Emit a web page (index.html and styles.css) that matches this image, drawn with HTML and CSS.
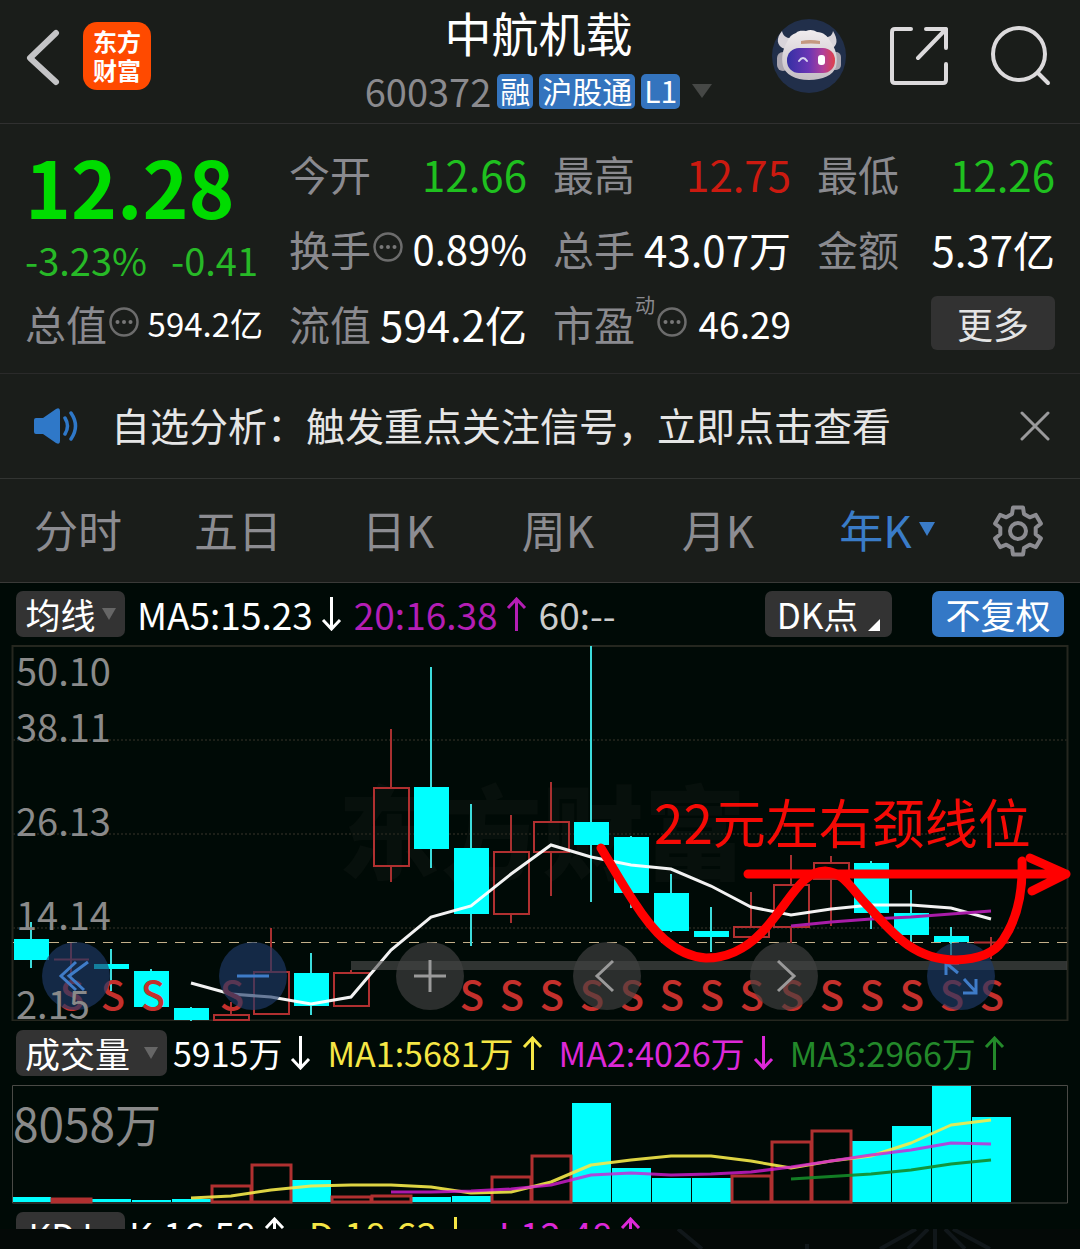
FILE: index.html
```html
<!DOCTYPE html>
<html lang="zh-CN">
<head>
<meta charset="utf-8">
<meta name="viewport" content="width=device-width, initial-scale=1">
<title>中航机载 600372</title>
<link rel="stylesheet" href="styles.css">
</head>
<body>
<header class="topbar">
  <div class="topbar-left">
    <button class="icon-btn" aria-label="返回"><svg width="34" height="60" viewBox="0 0 34 60"><path d="M30 7 4 32l26 24" fill="none" stroke="#c4c4c6" stroke-width="6" stroke-linecap="round" stroke-linejoin="round"/></svg></button>
    <a class="logo" href="#"><span>东方</span><span>财富</span></a>
  </div>
  <div class="stock">
    <h1 class="stock-name">中航机载</h1>
    <div class="stock-sub">
      <span class="stock-code">600372</span>
      <span class="badge">融</span><span class="badge">沪股通</span><span class="badge">L1</span>
      <svg class="caret" width="20" height="14" viewBox="0 0 20 14"><path d="M0 0h20L10 14z" fill="#464846"/></svg>
    </div>
  </div>
  <div class="topbar-right">
    <button class="icon-btn" aria-label="智能助手">
      <svg width="76" height="76" viewBox="0 0 76 76">
        <defs>
          <linearGradient id="visor" x1="0" x2="1"><stop offset="0" stop-color="#3430a4"/><stop offset=".45" stop-color="#6a35b4"/><stop offset=".75" stop-color="#b0409a"/><stop offset="1" stop-color="#e0404a"/></linearGradient>
          <linearGradient id="shell" x1="0" y1="0" x2="0" y2="1"><stop offset="0" stop-color="#f0ecee"/><stop offset="1" stop-color="#c4bec4"/></linearGradient>
        </defs>
        <circle cx="38" cy="38" r="37" fill="#212f4a"/>
        <path d="M11 13c-6 7-6 15 3 18l8-11c-6 1-10-2-11-7zM62 13c5 8 5 15-2 18l-8-12c6 1 9-1 10-6z" fill="#d8d4da"/>
        <rect x="6" y="34" width="12" height="19" rx="6" fill="#a9a4ae"/><rect x="59" y="34" width="11" height="18" rx="5" fill="#a9a4ae"/>
        <path d="M16 24c2-5 5-8 9-9 3-3 7-2 10-2 4-2 8-1 11 1 6 0 11 4 13 9 6 8 8 16 6 26-3 8-13 13-27 13S14 56 12 48c-2-9 0-17 4-24z" fill="url(#shell)"/>
        <path d="M30 23q9-2 19 0v3q-9-1-19 0z" fill="#c59a80"/>
        <rect x="16" y="30" width="48" height="25" rx="12" fill="url(#visor)"/>
        <path d="M28 43q4-6 8 0" fill="none" stroke="#d8d4f0" stroke-width="2" stroke-linecap="round"/>
        <rect x="47" y="37" width="7" height="10" rx="3" fill="#fff"/>
      </svg>
    </button>
    <button class="icon-btn" aria-label="分享"><svg width="58" height="58" viewBox="0 0 58 58" fill="none" stroke="#dcdadc" stroke-width="4" stroke-linecap="round" stroke-linejoin="round"><path d="M21 2H5q-3 0-3 3v48q0 3 3 3h48q3 0 3-3V37M36 2h20v19M56 2 28 31"/></svg></button>
    <button class="icon-btn" aria-label="搜索"><svg width="60" height="60" viewBox="0 0 60 60" fill="none" stroke="#dcdadc" stroke-width="4" stroke-linecap="round"><circle cx="28" cy="28" r="26"/><path d="m47 47 10 10"/></svg></button>
  </div>
</header>

<section class="quote">
  <div class="price">
    <div class="price-now">12.28</div>
    <div class="price-change"><span>-3.23%</span><span>-0.41</span></div>
  </div>
  <div class="cell"><span class="label">今开</span><span class="value down">12.66</span></div>
  <div class="cell"><span class="label">最高</span><span class="value up">12.75</span></div>
  <div class="cell"><span class="label">最低</span><span class="value down">12.26</span></div>
  <div class="cell"><span class="label">换手<svg class="info" viewBox="0 0 30 30"><use href="#i-dots"/></svg></span><span class="value value-md">0.89%</span></div>
  <div class="cell"><span class="label">总手</span><span class="value">43.07万</span></div>
  <div class="cell"><span class="label">金额</span><span class="value">5.37亿</span></div>
  <div class="cell"><span class="label">总值<svg class="info" viewBox="0 0 30 30"><use href="#i-dots"/></svg></span><span class="value value-sm">594.2亿</span></div>
  <div class="cell"><span class="label">流值</span><span class="value">594.2亿</span></div>
  <div class="cell"><span class="label">市盈<sup class="sup">动</sup><svg class="info" viewBox="0 0 30 30"><use href="#i-dots"/></svg></span><span class="value value-pe">46.29</span></div>
  <div class="cell cell-end"><button class="more">更多</button></div>
</section>

<section class="notice">
  <svg width="44" height="36" viewBox="0 0 44 36"><path d="M0 12q0-2 2-2h7L22 1q4-2 4 2v30q0 4-4 2L9 26H2q-2 0-2-2z" fill="#2f78c8"/><path d="M31 10q5 8 0 16M37 5q9 13 0 26" fill="none" stroke="#2f78c8" stroke-width="3.5" stroke-linecap="round"/></svg>
  <a class="notice-text" href="#">自选分析：触发重点关注信号，立即点击查看</a>
  <button class="icon-btn" aria-label="关闭"><svg width="30" height="30" viewBox="0 0 30 30"><path d="m2 2 26 26M28 2 2 28" stroke="#9a9a9c" stroke-width="3" stroke-linecap="round"/></svg></button>
</section>

<nav class="tabs">
  <button class="tab">分时</button>
  <button class="tab">五日</button>
  <button class="tab">日K</button>
  <button class="tab">周K</button>
  <button class="tab">月K</button>
  <button class="tab tab-active">年K<svg width="16" height="14" viewBox="0 0 16 14"><path d="M0 0h16L8 14z" fill="#3a7cc8"/></svg></button>
  <button class="tab tab-gear" aria-label="设置"><svg width="54" height="54" viewBox="-27 -27 54 54" fill="none" stroke="#8c8c91" stroke-width="4" stroke-linejoin="round"><path d="M-6-17-5-23.500H5L6-17 11.700-13.700 17.900-16.100 22.900-7.400 17.700-3.300V3.300L22.900 7.400 17.900 16.100 11.700 13.700 6 17 5 23.500H-5L-6 17-11.700 13.700-17.900 16.100-22.900 7.400-17.700 3.300V-3.300L-22.900-7.400-17.900-16.100-11.700-13.700z"/><circle r="8"/></svg></button>
</nav>

<main class="charts">
  <div class="bar bar-ma">
    <button class="chip">均线<svg width="14" height="12" viewBox="0 0 14 12"><path d="M0 0h14L7 12z" fill="#666"/></svg></button>
    <span class="ind white">MA5:15.23<svg class="arrow" viewBox="0 0 21 34"><use href="#i-down"/></svg></span>
    <span class="ind magenta">20:16.38<svg class="arrow" viewBox="0 0 21 34"><use href="#i-up"/></svg></span>
    <span class="ind grey">60:--</span>
    <button class="chip chip-dk">DK点<svg width="12" height="12" viewBox="0 0 12 12"><path d="M12 0v12H0z" fill="#fff"/></svg></button>
    <button class="chip chip-blue">不复权</button>
  </div>

  <div class="kline">
    <svg class="plot" viewBox="0 645 1080 376">
      <g class="watermark"><text x="338" y="872">东方财富</text></g>
      <path d="M12.500 646H1067.500V1020.500H12.500z" fill="none" stroke="#25271f" stroke-width="2"/>
      <path d="M13 740h1054M13 834h1054M13 928h1054" stroke="#1c1f18" stroke-width="2" stroke-dasharray="2 2"/>
      <path d="M13 942.500h1054" stroke="#c4b08a" stroke-dasharray="10 8"/>
      <g class="wick-down">
        <path d="M31 922v46M111 949v42M151 969v6M191 1007v14M311 953v62M431 667v201M471 804v142M591 646v256M631 836v72M671 874v58M711 907v45M871 861v68M911 890v52M951 927v28"/>
      </g>
      <g class="wick-up">
        <path d="M71 943v44M231 1002v12M271 928v44M351 970v3M391 729v59M391 866v16M511 815v37M511 914v9M551 782v40M551 852v44M751 892v35M791 855v30M791 927v16M831 856v7M831 879v47M991 937v22"/>
      </g>
      <g fill="#00ffff">
        <path d="M14 939h35v21H14zM94 964h35v5H94zM134 971h35v36h-35zM174 1008h35v12h-35zM294 973h35v33h-35zM414 787h35v62h-35zM454 848h35v66h-35zM574 822h35v23h-35zM614 837h35v56h-35zM654 893h35v38h-35zM694 931h35v6h-35zM854 863h35v50h-35zM894 913h35v22h-35zM934 936h35v6h-35z"/>
      </g>
      <path class="body-up" d="M54 959.500h35M214 1015h35v5h-35zM254 972h35v42h-35zM334 973h35v33h-35zM374 788h35v78h-35zM494 852h35v62h-35zM534 822h35v30h-35zM734 927h35v10h-35zM774 885h35v42h-35zM814 863h35v16h-35zM974 942.500h35"/>
      <path d="M191 983 231 994 271 997 311 1004 351 997 391 950 431 917 471 906 511 874 551 845 591 857 631 865 671 869 711 886 751 907 791 915 831 909 871 905 911 905 951 908 991 919" fill="none" stroke="#fff" stroke-width="3" stroke-opacity=".95"/>
      <path d="M791 926 831 922 871 919 911 917 951 914 991 911" fill="none" stroke="#a81ca8" stroke-width="3"/>
      <g class="signals">
        <text x="72" y="1010">S</text><text x="113" y="1010">S</text><text x="153" y="1010">S</text><text x="232" y="1010">S</text><text x="472" y="1010">S</text><text x="512" y="1010">S</text><text x="552" y="1010">S</text><text x="592" y="1010">S</text><text x="632" y="1010">S</text><text x="672" y="1010">S</text><text x="712" y="1010">S</text><text x="752" y="1010">S</text><text x="792" y="1010">S</text><text x="832" y="1010">S</text><text x="872" y="1010">S</text><text x="912" y="1010">S</text><text x="952" y="1010">S</text><text x="992" y="1010">S</text>
      </g>
      <path d="M351 961h716v9H351z" fill="#505050" fill-opacity=".6"/>
    </svg>
    <div class="controls">
      <button class="round round-blue" aria-label="最早"><svg viewBox="0 0 68 68"><path d="M34 20 19 34l15 14M46 20 27 34l15 14"/></svg></button>
      <button class="round round-blue" aria-label="缩小"><svg viewBox="0 0 68 68"><path d="M18 34h32"/></svg></button>
      <button class="round" aria-label="放大"><svg viewBox="0 0 68 68"><path d="M18 34h32M34 18v32"/></svg></button>
      <button class="round" aria-label="向左"><svg viewBox="0 0 68 68"><path d="M40 19 24 34l16 15"/></svg></button>
      <button class="round" aria-label="向右"><svg viewBox="0 0 68 68"><path d="m28 19 16 15-16 15"/></svg></button>
      <button class="round round-blue" aria-label="全屏"><svg viewBox="0 0 68 68"><path d="M31 31 19 21M19 33V21h13M37 37l12 13M36 51h13V37"/></svg></button>
    </div>
    <svg class="plot plot-over" viewBox="0 645 1080 376">
      <g class="axis">
        <text x="16" y="686">50.10</text><text x="16" y="742">38.11</text><text x="16" y="836">26.13</text><text x="16" y="930">14.14</text><text x="16" y="1019">2.15</text>
      </g>
      <g fill="none" stroke="#ff0000" stroke-width="9" stroke-linecap="round" stroke-linejoin="round">
        <path d="M601 848C612 866 622 884 634 902 652 930 674 956 706 958 735 958 756 942 774 918 792 896 804 871 825 871 844 872 852 890 868 906 890 930 912 960 956 960 978 959 994 954 1003 940 1018 918 1023 892 1022 861"/>
        <path d="M748 874H1066M1030 858 1066 874 1032 891"/>
      </g>
      <text class="note" x="654" y="844">22元左右颈线位</text>
    </svg>
  </div>

  <div class="bar bar-vol">
    <button class="chip chip-vol">成交量<svg width="14" height="12" viewBox="0 0 14 12"><path d="M0 0h14L7 12z" fill="#666"/></svg></button>
    <span class="ind white">5915万<svg class="arrow" viewBox="0 0 21 34"><use href="#i-down"/></svg></span>
    <span class="ind yellow">MA1:5681万<svg class="arrow" viewBox="0 0 21 34"><use href="#i-up"/></svg></span>
    <span class="ind pink">MA2:4026万<svg class="arrow" viewBox="0 0 21 34"><use href="#i-down"/></svg></span>
    <span class="ind green">MA3:2966万<svg class="arrow" viewBox="0 0 21 34"><use href="#i-up"/></svg></span>
  </div>

  <svg class="plot" viewBox="0 1085 1080 119">
    <path d="M12.500 1085.500H1067.500V1203H12.500z" fill="none" stroke="#4a4a46"/>
    <text class="vol-max" x="13" y="1142">8058万</text>
    <path fill="#00ffff" d="M13 1197h38v5H13zM92 1199h39v3H92zM132 1200h39v2h-39zM172 1199h39v3h-39zM292 1180h39v22h-39zM412 1197h39v5h-39zM452 1196h39v6h-39zM572 1103h39v99h-39zM612 1168h39v34h-39zM652 1178h39v24h-39zM692 1178h39v24h-39zM852 1141h39v61h-39zM892 1126h39v76h-39zM932 1086h39v116h-39zM972 1117h39v85h-39z"/>
    <path class="body-up vol-up" d="M52 1199h39v3H52zM212 1186h39v16h-39zM252 1165h39v37h-39zM332 1197h39v5h-39zM372 1196h39v6h-39zM492 1177h39v25h-39zM532 1156h39v46h-39zM732 1176h39v26h-39zM772 1142h39v60h-39zM812 1131h39v71h-39z"/>
    <g fill="none" stroke-width="3" stroke-linejoin="round">
      <path stroke="#f5ea4a" stroke-opacity=".9" d="M191 1198 231 1196 271 1190 311 1186 351 1185 391 1185 431 1187 471 1193 511 1192 551 1182 591 1165 631 1160 671 1156 711 1156 751 1161 791 1168 831 1161 871 1156 911 1143 951 1125 991 1120"/>
      <path stroke="#d41cd4" stroke-opacity=".8" d="M391 1192 431 1192 471 1191 511 1189 551 1185 591 1175 631 1173 671 1175 711 1174 751 1172 791 1167 831 1161 871 1155 911 1150 951 1143 991 1144"/>
      <path stroke="#148a28" stroke-opacity=".9" d="M791 1179 871 1174 911 1170 951 1164 991 1160"/>
    </g>
  </svg>

  <div class="bar bar-kdj">
    <button class="chip chip-kdj">KDJ<svg width="14" height="12" viewBox="0 0 14 12"><path d="M0 0h14L7 12z" fill="#666"/></svg></button>
    <span class="ind white">K:16.58<svg class="arrow" viewBox="0 0 21 34"><use href="#i-up"/></svg></span>
    <span class="ind yellow">D:18.63<svg class="arrow" viewBox="0 0 21 34"><use href="#i-down"/></svg></span>
    <span class="ind pink">J:12.48<svg class="arrow" viewBox="0 0 21 34"><use href="#i-up"/></svg></span>
  </div>
</main>

<footer class="foot">
  <svg class="plot" viewBox="0 1229 1080 20"><g fill="none" stroke="#11171a" stroke-width="4"><path d="M678 1229 702 1249M807 1244v5M916 1229 880 1249M928 1229 908 1249M935 1229v20M945 1229 965 1249M953 1229 990 1249"/></g></svg>
</footer>

<svg class="defs" width="0" height="0" aria-hidden="true">
  <symbol id="i-dots" viewBox="0 0 30 30"><circle cx="15" cy="15" r="13.500" fill="none" stroke="#6c6c6c" stroke-width="2.500"/><circle cx="8.500" cy="15" r="2" fill="#777"/><circle cx="15" cy="15" r="2" fill="#777"/><circle cx="21.500" cy="15" r="2" fill="#777"/></symbol>
  <symbol id="i-down" viewBox="0 0 21 34"><path d="M10.500 0v32M2 23l8.500 9 8.500-9" fill="none" stroke="currentColor" stroke-width="3"/></symbol>
  <symbol id="i-up" viewBox="0 0 21 34"><path d="M10.500 34V2M2 11l8.500-9 8.500 9" fill="none" stroke="currentColor" stroke-width="3"/></symbol>
</svg>
</body>
</html>
```
FILE: styles.css
```css
* { box-sizing: border-box; }

body {
  margin: 0;
  background: #000a06;
  color: #fff;
  font-family: "Noto Sans CJK SC", sans-serif;
  overflow-x: hidden;
}

button {
  margin: 0;
  padding: 0;
  border: 0;
  background: none;
  color: inherit;
  font: inherit;
  cursor: pointer;
}

a { color: inherit; text-decoration: none; }
svg { display: block; flex: none; }
.defs { position: absolute; }

/* Header */
.topbar {
  display: grid;
  grid-template-columns: 1fr auto 1fr;
  align-items: start;
  height: 124px;
  padding: 0 29px 0 26px;
  background: #1a1d1a;
  border-bottom: 1px solid #303030;
}
.topbar-left { display: flex; align-items: center; gap: 23px; padding-top: 22px; }
.topbar-right { display: flex; align-items: center; justify-content: flex-end; gap: 43px; padding-top: 18px; }
.icon-btn { display: flex; }
.logo {
  display: flex;
  flex-direction: column;
  align-items: center;
  justify-content: center;
  width: 68px;
  height: 68px;
  padding-bottom: 2px;
  border-radius: 14px;
  background: #ff4a00;
  font-size: 24px;
  font-weight: 700;
  line-height: 29px;
}
.stock { display: flex; flex-direction: column; align-items: center; }
.stock-name { margin: 0; font-size: 47px; font-weight: 400; line-height: 64px; }
.stock-sub { display: flex; align-items: center; gap: 6px; height: 54px; }
.stock-code { color: #8a8a8e; font-size: 38px; line-height: 46px; }
.badge {
  padding: 0 3px 2px;
  border-radius: 5px;
  background: #3474be;
  font-size: 30px;
  line-height: 33px;
}
.caret { margin-left: 6px; }

/* Quote panel */
.quote {
  display: grid;
  grid-template-columns: repeat(4, 1fr);
  grid-auto-rows: 75px;
  column-gap: 26px;
  padding: 12px 25px;
  background: #1a1d1a;
  border-bottom: 1px solid #2a2a2a;
}
.price { grid-row: span 2; color: #00dc00; }
.price-now { font-size: 78px; font-weight: 700; line-height: 98px; }
.price-change {
  display: flex;
  gap: 24px;
  color: #27b927;
  font-size: 38px;
  line-height: 52px;
}
.cell { display: flex; align-items: center; justify-content: space-between; white-space: nowrap; }
.cell-end { justify-content: flex-end; }
.label { display: flex; align-items: center; color: #8a8a8f; font-size: 41px; line-height: 75px; }
.value { font-size: 42px; line-height: 75px; }
.value-md { font-size: 40px; }
.value-pe { font-size: 37px; }
.value-sm { font-size: 33px; }
.up { color: #cc1a10; }
.down { color: #1fc01f; }
.info { width: 30px; height: 30px; margin: 0 0 4px 2px; }
.sup { align-self: flex-start; font-size: 20px; line-height: 38px; }
.more {
  width: 124px;
  height: 54px;
  margin-bottom: 2px;
  border-radius: 6px;
  background: #323232;
  color: #e4e4e4;
  font-size: 36px;
  line-height: 52px;
}

/* Notice */
.notice {
  display: flex;
  align-items: center;
  height: 105px;
  padding: 0 30px 0 34px;
  gap: 33px;
  background: #1a1d1a;
  border-bottom: 1px solid #323432;
}
.notice-text { flex: 1; padding-bottom: 4px; color: #e6e6e6; font-size: 39px; white-space: nowrap; }

/* Period tabs */
.tabs {
  display: grid;
  grid-template-columns: repeat(6, 4fr) 3fr;
  height: 104px;
  background: #1a1d1a;
  border-bottom: 1px solid #3a3a38;
}
.tab {
  display: flex;
  align-items: center;
  justify-content: center;
  gap: 7px;
  padding: 0 4px 3px 0;
  color: #8c8c91;
  font-size: 44px;
}
.tab-active { padding-left: 18px; color: #3a7cc8; }
.tab-gear { padding-bottom: 0; }

/* Indicator bars */
.bar {
  display: flex;
  align-items: center;
  padding: 0 16px;
  white-space: nowrap;
}
.bar-ma { height: 62px; gap: 12px; font-size: 37px; }
.bar-vol { height: 64px; gap: 16px; font-size: 34px; }
.bar-kdj { height: 25px; gap: 24px; padding-top: 8px; align-items: flex-start; overflow: hidden; font-size: 37px; }
.chip {
  display: flex;
  align-items: center;
  justify-content: center;
  gap: 6px;
  width: 109px;
  height: 46px;
  border-radius: 7px;
  background: #333;
  font-size: 35px;
  line-height: 44px;
}
.chip-dk { width: 127px; margin-left: auto; gap: 10px; }
.chip-dk svg { align-self: flex-end; margin-bottom: 6px; }
.chip-blue { width: 132px; margin-left: 28px; background: #3478c6; }
.chip-vol { width: 151px; gap: 14px; margin-right: -10px; }
.chip-kdj { margin-right: -20px; line-height: 42px; }
.ind { display: flex; align-items: center; gap: 8px; line-height: 46px; }
.arrow { width: 21px; height: 34px; }
.bar-kdj .ind { line-height: 44px; }
.white { color: #fff; }
.grey { color: #ccc; }
.magenta { color: #b41eb4; }
.yellow { color: #f5e645; }
.pink { color: #dc28d8; }
.green { color: #23892a; }

/* Plots */
.kline { position: relative; }
.plot { display: block; width: 100%; height: auto; }
.plot-over { position: absolute; inset: 0; pointer-events: none; }
.watermark { fill: #07100c; font-size: 102px; font-weight: 900; }
.axis { fill: #8a8a8a; font-size: 38px; }
.signals { fill: #c4302c; font-size: 40px; font-weight: 500; text-anchor: middle; }
.note { fill: #f50a05; font-size: 53px; }
.vol-max { fill: #8a8a8a; font-size: 46px; }
.wick-down { stroke: #3cdcdc; stroke-width: 2; }
.wick-up { stroke: #a83030; stroke-width: 2; }
.body-up { fill: none; stroke: #b03030; stroke-width: 2; }
.vol-up { stroke-width: 3; }

.controls {
  position: absolute;
  top: 79%;
  left: 0;
  right: 0;
  display: flex;
  justify-content: space-between;
  padding: 0 7.9% 0 3.9%;
}
.round {
  width: 68px;
  height: 68px;
  border-radius: 50%;
  background: rgba(66, 66, 66, .65);
}
.round svg { fill: none; stroke: #9a9a9a; stroke-width: 3; }
.round-blue { background: rgba(30, 58, 104, .65); }
.round-blue svg { stroke: #3f7cc8; }

.foot { background: #040907; overflow: hidden; }
```
